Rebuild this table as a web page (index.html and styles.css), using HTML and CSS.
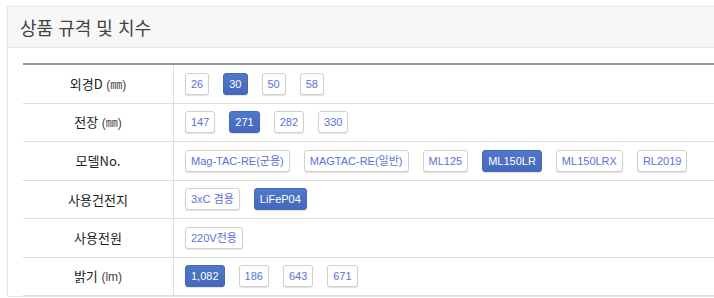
FILE: index.html
```html
<!DOCTYPE html>
<html lang="ko">
<head>
    <meta charset="UTF-8">
    <title>상품 규격 및 치수</title>
    <link rel="stylesheet" href="styles.css">
</head>
<body>
    <div class="panel">
        <div class="panel-head">
            <h2>상품 규격 및 치수</h2>
        </div>
        <div class="panel-body">
            <table class="spec">
                <tr>
                    <th>외경D <small>(㎜)</small></th>
                    <td>
                        <div class="opts">
                            <a class="opt">26</a>
                            <a class="opt on">30</a>
                            <a class="opt">50</a>
                            <a class="opt">58</a>
                        </div>
                    </td>
                </tr>
                <tr>
                    <th>전장 <small>(㎜)</small></th>
                    <td>
                        <div class="opts">
                            <a class="opt">147</a>
                            <a class="opt on">271</a>
                            <a class="opt">282</a>
                            <a class="opt">330</a>
                        </div>
                    </td>
                </tr>
                <tr>
                    <th>모델No.</th>
                    <td>
                        <div class="opts">
                            <a class="opt">Mag-TAC-RE(군용)</a>
                            <a class="opt">MAGTAC-RE(일반)</a>
                            <a class="opt">ML125</a>
                            <a class="opt on">ML150LR</a>
                            <a class="opt">ML150LRX</a>
                            <a class="opt">RL2019</a>
                        </div>
                    </td>
                </tr>
                <tr>
                    <th>사용건전지</th>
                    <td>
                        <div class="opts">
                            <a class="opt">3xC 겸용</a>
                            <a class="opt on">LiFeP04</a>
                        </div>
                    </td>
                </tr>
                <tr>
                    <th>사용전원</th>
                    <td>
                        <div class="opts">
                            <a class="opt">220V전용</a>
                        </div>
                    </td>
                </tr>
                <tr>
                    <th>밝기 <small>(lm)</small></th>
                    <td>
                        <div class="opts">
                            <a class="opt on">1,082</a>
                            <a class="opt">186</a>
                            <a class="opt">643</a>
                            <a class="opt">671</a>
                        </div>
                    </td>
                </tr>
            </table>
        </div>
    </div>
</body>
</html>
```

FILE: styles.css
```css
body {
    margin: 0;
    padding: 6px 0 0 7px;
    font-family: "Liberation Sans", "Noto Sans CJK KR", sans-serif;
    color: #222;
    background: #fff;
    overflow: hidden;
}
.panel {
    width: 760px;
    border: 1px solid #e6e6e6;
}
.panel-head {
    height: 40px;
    background-color: #f7f7f7;
    border-bottom: 1px solid #e6e6e6;
    display: flex;
    align-items: center;
    padding-left: 12px;
}
.panel-head h2 {
    margin: 0;
    font-size: 18px;
    font-weight: normal;
    color: #444;
    font-family: "Noto Sans CJK KR", sans-serif;
}
.panel-body {
    padding: 15px 0 0 15px;
}
.spec {
    width: 100%;
    border-collapse: collapse;
    border-top: 2px solid #999;
}
.spec th,
.spec td {
    border-bottom: 1px solid #ddd;
    height: 37.5px;
    padding: 0;
    line-height: 1;
}
.spec th {
    width: 150px;
    border-right: 1px solid #ddd;
    font-weight: normal;
    font-size: 13px;
    font-family: "Noto Sans CJK KR", sans-serif;
    color: #222;
    text-align: center;
}
.spec th small {
    font-size: 12px;
    font-family: "Liberation Sans", "Noto Sans CJK KR", sans-serif;
    color: #444;
}
.spec td {
    padding-left: 11px;
}
.opts {
    display: flex;
    gap: 14px;
}
.opt {
    display: inline-block;
    height: 22px;
    line-height: 20px;
    box-sizing: border-box;
    padding: 0 5px;
    font-size: 11px;
    color: #5b72d6;
    background: #fff;
    border: 1px solid #d0d0d0;
    border-radius: 3px;
    box-shadow: 0 1px 1px rgba(0,0,0,0.12);
    cursor: pointer;
}
.opt.on {
    color: #fff;
    background: linear-gradient(#5078c8, #4568be);
    border-color: #4568be;
}
```
